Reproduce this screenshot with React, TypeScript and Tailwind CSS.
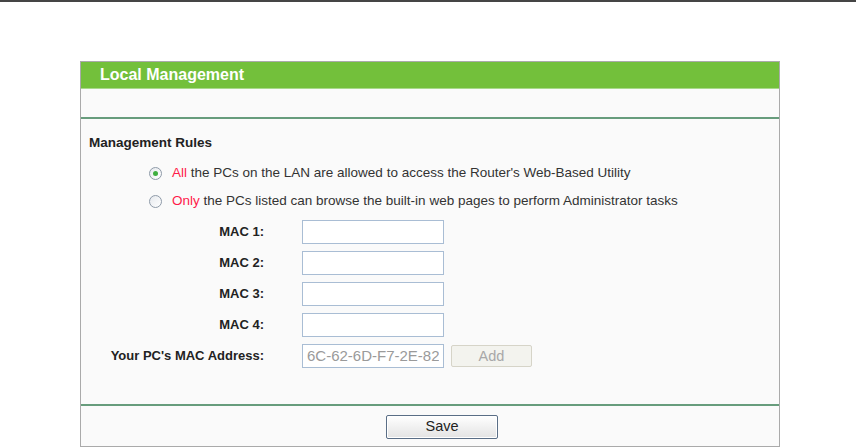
import React from 'react'

function Radio({ checked }: { checked?: boolean }) {
  return (
    <span className="flex h-[13px] w-[13px] items-center justify-center rounded-full border border-[#8e9aa8] bg-gradient-to-br from-[#e6e9ed] to-[#ffffff]">
      {checked && <span className="h-[5px] w-[5px] rounded-full bg-[#3fae3f]" />}
    </span>
  )
}

function Field({ label, children }: { label: string; children: React.ReactNode }) {
  return (
    <div className="flex h-[31px] items-center">
      <div className="w-[184px] pr-[1px] text-right font-bold text-[13px] text-[#222]">{label}</div>
      <div className="flex items-center gap-[7px] pl-[37px]">{children}</div>
    </div>
  )
}

const inputCls = 'h-[24px] w-[142px] border border-[#a9bdd4] bg-white px-[4px] text-[15px] outline-none'

export default function App() {
  return (
    <div className="h-[447px] w-[856px] overflow-hidden bg-white font-['Liberation_Sans',Arial,sans-serif]">
      <div className="h-[2px] bg-[#454545]" />
      <div className="ml-[80px] mt-[59px] w-[700px] border border-[#aaaaaa] bg-[#fafafa]">
        <div className="flex h-[26px] items-center bg-[#73c03b] pl-[19px] text-[16px] font-bold text-white">
          Local Management
        </div>
        <div className="h-[1px] bg-[#a8d98a]" />
        <div className="h-[28px]" />
        <div className="h-[2px] bg-[#679c7c]" />

        <div className="mt-[10px] mb-[2px] flex h-[28px] items-center pl-[8px] text-[13.5px] font-bold text-[#222]">
          Management Rules
        </div>
        <div className="flex h-[28px] items-center gap-[10px] pl-[68px] text-[13.5px] text-[#333]">
          <Radio checked />
          <span>
            <span className="text-[#ff1a4a]">All</span> the PCs on the LAN are allowed to access the Router's Web-Based Utility
          </span>
        </div>
        <div className="flex h-[28px] items-center gap-[10px] pl-[68px] text-[13.5px] text-[#333]">
          <Radio />
          <span>
            <span className="text-[#ff1a4a]">Only</span> the PCs listed can browse the built-in web pages to perform Administrator tasks
          </span>
        </div>

        <div className="mt-[1px]">
          <Field label="MAC 1:">
            <input className={inputCls} />
          </Field>
          <Field label="MAC 2:">
            <input className={inputCls} />
          </Field>
          <Field label="MAC 3:">
            <input className={inputCls} />
          </Field>
          <Field label="MAC 4:">
            <input className={inputCls} />
          </Field>
          <Field label="Your PC's MAC Address:">
            <input className={inputCls + ' text-[#9a9a9a]'} defaultValue="6C-62-6D-F7-2E-82" readOnly />
            <button className="h-[22px] w-[81px] rounded-[2px] border border-[#d6d4c8] bg-[#f3f3ee] text-[14.5px] text-[#a8a8a8]">
              Add
            </button>
          </Field>
        </div>

        <div className="h-[33px]" />
        <div className="h-[2px] bg-[#679c7c]" />
        <div className="flex h-[40px] items-start justify-center pt-[9px] pl-[24px]">
          <button className="h-[24px] w-[112px] rounded-[2px] border border-[#5a6e86] bg-gradient-to-b from-[#ffffff] to-[#e3e3e3] text-[14.5px] text-[#222] shadow-[inset_0_0_0_1px_#ffffff]">
            Save
          </button>
        </div>
      </div>
    </div>
  )
}
